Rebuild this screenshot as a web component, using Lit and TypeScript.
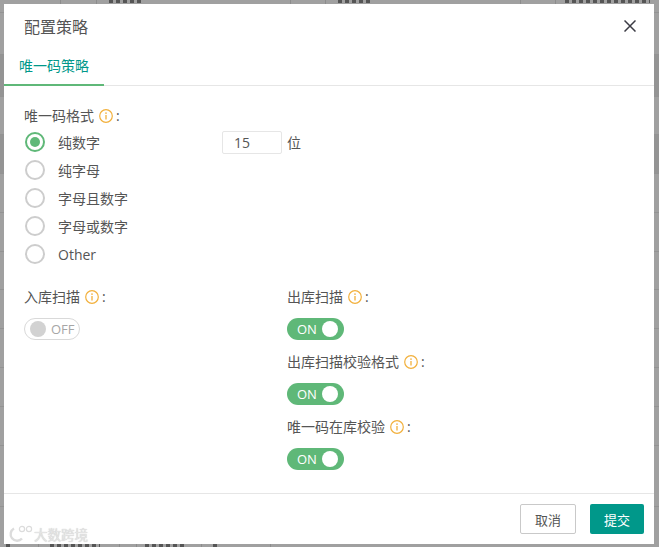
import { LitElement, html, css } from "lit";
import { customElement } from "lit/decorators.js";

const info = html`<svg class="info" viewBox="0 0 14 14" width="14" height="14"><circle cx="7" cy="7" r="6.3" fill="none" stroke="#f2b03c" stroke-width="1.2"/><circle cx="7" cy="4.1" r=".85" fill="#f2b03c"/><path d="M7 6v4.6" stroke="#f2b03c" stroke-width="1.3" fill="none"/></svg>`;

// Backdrop table: [height, darker band?]
const rows: [number, boolean][] = [
  [13, false], [42, false], [42, true], [38, false], [39, true], [39, false],
  [39, false], [38, false], [39, false], [39, false], [39, false], [39, false], [61, false],
];

@customElement("app-root")
export class AppRoot extends LitElement {
  static styles = css`
    :host { display: block; width: 659px; height: 547px; overflow: hidden; position: relative; background: #a0a0a0;
      font-family: "Open Sans", "Noto Sans CJK SC", sans-serif; font-size: 14px; color: #555; }
    .backdrop { display: flex; flex-direction: column; height: 547px; }
    .row { flex: none; box-sizing: border-box; border-bottom: 1px solid #939393; }
    .row.dark { background: #949494; }
    .vline { position: absolute; width: 1px; background: #8c8c8c; }
    .frag { position: absolute; height: 3px; background: repeating-linear-gradient(90deg, #555 0 4px, transparent 4px 7px); }
    .modal { position: absolute; left: 4px; top: 4px; width: 650px; height: 540px; background: #fff; display: flex; flex-direction: column; }
    .head { height: 44px; flex: none; display: flex; align-items: center; justify-content: space-between; padding: 0 18px 0 20px; font-size: 16px; color: #555; }
    .close { display: block; }
    .tabs { height: 38px; flex: none; border-bottom: 1px solid #e6e6e6; box-sizing: border-box; }
    .tab { width: 85px; height: 36px; padding-left: 15px; line-height: 36px; color: #00988a; font-size: 14px; border-bottom: 2px solid #5fb878; }
    .body { flex: 1; padding: 20px 20px 0; box-sizing: border-box; }
    .label { display: flex; align-items: center; gap: 4.5px; height: 19px; line-height: 19px; color: #555; }
    .colon { margin-left: -1px; }
    .radios { display: flex; flex-direction: column; gap: 8px; margin-top: 7px; }
    .radio { display: flex; align-items: center; height: 20px; }
    .dot { width: 20px; height: 20px; box-sizing: border-box; border: 2px solid #cdcdcd; border-radius: 50%; margin: 0 13px 0 1px; flex: none; display: flex; align-items: center; justify-content: center; }
    .dot.on { border-color: #5fb878; }
    .dot.on::after { content: ""; width: 10px; height: 10px; border-radius: 50%; background: #5fb878; }
    .rtext { width: 164px; flex: none; }
    .num { width: 60px; height: 23px; box-sizing: border-box; border: 1px solid #e6e6e6; border-radius: 2px; padding-left: 11px; line-height: 21px; margin-right: 5px; }
    .cols { display: grid; grid-template-columns: 263px 1fr; margin-top: 23px; }
    .col { display: flex; flex-direction: column; }
    .toggle { width: 57px; height: 22px; border-radius: 11px; box-sizing: border-box; display: flex; align-items: center; margin: 12px 0; font-size: 13px; flex: none; }
    .toggle.on { background: #5fb878; color: #fff; padding: 0 6px 0 10px; justify-content: space-between; }
    .toggle.on i { width: 16px; height: 16px; background: #fff; border-radius: 50%; }
    .toggle.off { width: 56px; background: #fff; border: 1px solid #d9d9d9; color: #a6a6a6; padding: 0 0 0 5px; gap: 5px; }
    .toggle.off i { width: 16px; height: 16px; background: #d2d2d2; border-radius: 50%; }
    .foot { height: 51px; flex: none; border-top: 1px solid #e6e6e6; display: flex; justify-content: flex-end; align-items: flex-start; padding: 10px 10px 0 0; gap: 14px; box-sizing: border-box; }
    .btn { width: 56px; height: 30px; box-sizing: border-box; border-radius: 2px; display: flex; align-items: center; justify-content: center; font-size: 13px; }
    .cancel { border: 1px solid #c9c9c9; color: #555; background: #fff; }
    .ok { width: 54px; background: #00988a; color: #fff; }
    .mark { position: absolute; left: 7px; top: 524px; display: flex; align-items: center; gap: 1px; font-size: 13.5px; color: #e4e4e4; text-shadow: 0 0 1px #bbb; }
  `;

  render() {
    const radios = ["纯数字", "纯字母", "字母且数字", "字母或数字", "Other"];
    const t = (on: boolean) => html`<div class="toggle ${on ? "on" : "off"}">${on ? html`<span>ON</span><i></i>` : html`<i></i><span>OFF</span>`}</div>`;
    const l = (s: string) => html`<div class="label"><span>${s}</span>${info}<span class="colon">:</span></div>`;
    return html`
      <div class="backdrop">${rows.map(([h, d]) => html`<div class="row ${d ? "dark" : ""}" style="height:${h}px"></div>`)}</div>
      ${[60, 96, 290, 325, 520, 555].map((x) => html`<div class="vline" style="left:${x}px;top:0;height:4px"></div>`)}
      ${[38, 119, 136, 201, 270].map((x) => html`<div class="vline" style="left:${x}px;top:544px;height:3px"></div>`)}
      ${[[109, 34, 0], [338, 35, 0], [565, 85, 0], [6, 6, 544], [50, 50, 544], [145, 40, 544], [213, 6, 544]].map(
        ([x, w, y]) => html`<div class="frag" style="left:${x}px;width:${w}px;top:${y}px"></div>`
      )}
      <div class="modal">
        <div class="head"><span>配置策略</span>
          <svg class="close" width="12" height="12" viewBox="0 0 12 12"><path d="M.5.5l11 11M11.5.5l-11 11" stroke="#3b3b44" stroke-width="1.5" fill="none"/></svg>
        </div>
        <div class="tabs"><div class="tab">唯一码策略</div></div>
        <div class="body">
          ${l("唯一码格式")}
          <div class="radios">
            ${radios.map((r, i) => html`<div class="radio"><div class="dot ${i === 0 ? "on" : ""}"></div><div class="rtext">${r}</div>${i === 0 ? html`<div class="num">15</div><span>位</span>` : ""}</div>`)}
          </div>
          <div class="cols">
            <div class="col">${l("入库扫描")}${t(false)}</div>
            <div class="col">
              ${l("出库扫描")}${t(true)}
              ${l("出库扫描校验格式")}${t(true)}
              ${l("唯一码在库校验")}${t(true)}
            </div>
          </div>
        </div>
        <div class="foot"><div class="btn cancel">取消</div><div class="btn ok">提交</div></div>
      </div>
      <div class="mark"><svg width="26" height="18" viewBox="0 0 26 18"><path d="M7 3.5a6.5 6.5 0 1 0 8 10" stroke="#dcdcdc" stroke-width="2.4" fill="none"/><circle cx="15" cy="4" r="2.6" fill="none" stroke="#dcdcdc" stroke-width="1.2"/><circle cx="22" cy="4" r="2.6" fill="none" stroke="#dcdcdc" stroke-width="1.2"/></svg><span>大数跨境</span></div>
    `;
  }
}
